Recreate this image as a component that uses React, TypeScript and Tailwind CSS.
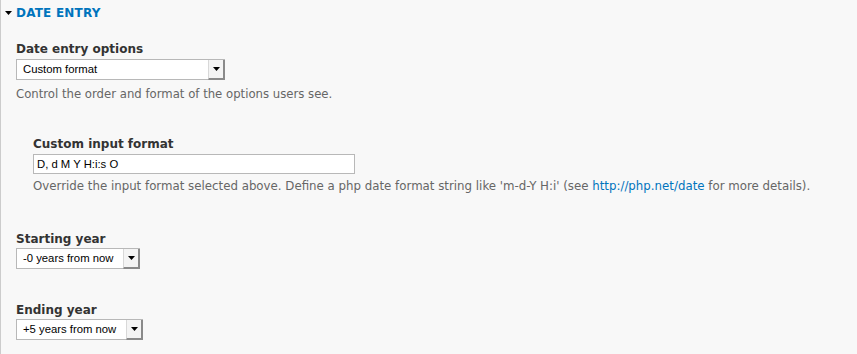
import React from "react";

function Caret() {
  return (
    <svg width="7" height="4" viewBox="0 0 7 4" className="block">
      <path d="M0 0 H7 L3.5 4 Z" fill="#000" />
    </svg>
  );
}

function FakeSelect({ value, width }: { value: string; width: string }) {
  return (
    <div className={`flex h-[21px] ${width} border border-[#b8b8b8] bg-white`}>
      <div
        className="flex flex-1 items-center pl-[6px] text-[11.3px] text-black leading-none"
        style={{ fontFamily: '"Liberation Sans", Arial, sans-serif' }}
      >
        {value}
      </div>
      <div className="flex w-[17px] items-center justify-center border-l border-[#d8d8d8] border-r-2 border-b-2 border-r-[#8a8a8a] border-b-[#8a8a8a] bg-[#f4f4f4] -mr-px -mb-px">
        <Caret />
      </div>
    </div>
  );
}

export default function App() {
  return (
    <div
      className="h-[354px] w-[857px] overflow-hidden border-l border-[#cccccc] bg-[#f8f8f8] text-[#333]"
      style={{ fontFamily: '"DejaVu Sans", "Lucida Grande", sans-serif' }}
    >
      <div className="flex items-center pl-[4px] pt-[2px] h-[24px]">
        <svg width="7" height="4" viewBox="0 0 7 4" className="mr-[4px]">
          <path d="M0 0 H7 L3.5 4 Z" fill="#000" />
        </svg>
        <span className="text-[12px] font-bold uppercase text-[#0074bd] tracking-[0.2px]">
          Date entry
        </span>
      </div>

      <div className="pl-[15px] pt-[17px]">
        <div className="text-[12px] font-bold leading-[16px]">Date entry options</div>
        <div className="mt-[2px]">
          <FakeSelect value="Custom format" width="w-[209px]" />
        </div>
        <div className="mt-[7px] text-[11.7px] text-[#666] leading-[14px]">
          Control the order and format of the options users see.
        </div>

        <div className="pl-[17px] pt-[35px]">
          <div className="text-[12px] font-bold leading-[16px]">Custom input format</div>
          <div
            className="mt-[2px] flex h-[20px] w-[322px] items-center border border-[#b8b8b8] bg-white pl-[3px] text-[11.3px] text-black"
            style={{ fontFamily: '"Liberation Sans", Arial, sans-serif' }}
          >
            D, d M Y H:i:s O
          </div>
          <div className="mt-[5px] text-[11.8px] text-[#666] leading-[14px]">
            Override the input format selected above. Define a php date format string like 'm-d-Y H:i' (see{" "}
            <span className="text-[#0074bd]">http://php.net/date</span> for more details).
          </div>
        </div>

        <div className="pt-[38px]">
          <div className="text-[12px] font-bold leading-[16px]">Starting year</div>
          <div className="mt-[1px]">
            <FakeSelect value="-0 years from now" width="w-[124px]" />
          </div>
        </div>

        <div className="pt-[33px]">
          <div className="text-[12px] font-bold leading-[16px]">Ending year</div>
          <div className="mt-[1px]">
            <FakeSelect value="+5 years from now" width="w-[127px]" />
          </div>
        </div>
      </div>
    </div>
  );
}
